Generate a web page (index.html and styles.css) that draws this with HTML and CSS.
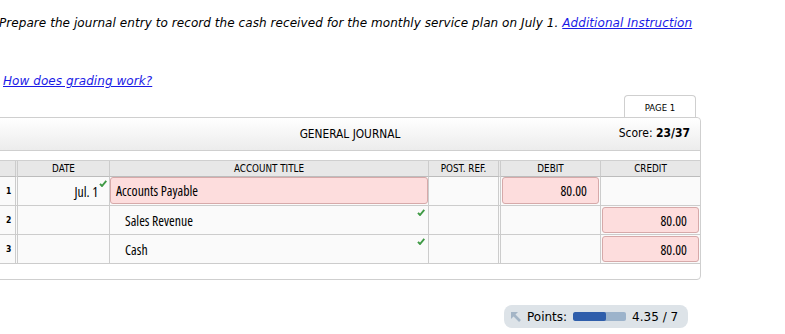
FILE: index.html
```html
<!DOCTYPE html>
<html>
<head>
<meta charset="utf-8">
<link rel="stylesheet" href="styles.css">
</head>
<body>
<div class="page">
  <p class="instr">Prepare the journal entry to record the cash received for the monthly service plan on July 1. <a href="#">Additional Instruction</a></p>
  <p class="grading"><a href="#">How does grading work?</a></p>

  <div class="tabs"><div class="tab">PAGE 1</div></div>
  <div class="panel">
    <div class="panel-head">
      <span class="title">GENERAL JOURNAL</span>
      <span class="score">Score: <b>23/37</b></span>
    </div>
    <div class="grid">
      <div class="h dbl"></div>
      <div class="h">DATE</div>
      <div class="h">ACCOUNT TITLE</div>
      <div class="h dbl">POST. REF.</div>
      <div class="h">DEBIT</div>
      <div class="h last">CREDIT</div>

      <div class="c num dbl">1</div>
      <div class="c date">Jul. 1<svg class="chk" viewBox="0 0 8 7" width="8" height="7"><path d="M1 3.8 L3 6 L7.3 0.8" fill="none" stroke="#3f9a45" stroke-width="1.9"/></svg></div>
      <div class="c"><div class="box">Accounts Payable</div></div>
      <div class="c dbl"></div>
      <div class="c"><div class="box amt">80.00</div></div>
      <div class="c last"></div>

      <div class="c num dbl">2</div>
      <div class="c date"></div>
      <div class="c acct"><span class="ind">Sales Revenue</span><svg class="chk" viewBox="0 0 8 7" width="8" height="7"><path d="M1 3.8 L3 6 L7.3 0.8" fill="none" stroke="#3f9a45" stroke-width="1.9"/></svg></div>
      <div class="c dbl"></div>
      <div class="c"></div>
      <div class="c last"><div class="box amt">80.00</div></div>

      <div class="c num dbl">3</div>
      <div class="c date"></div>
      <div class="c acct"><span class="ind">Cash</span><svg class="chk" viewBox="0 0 8 7" width="8" height="7"><path d="M1 3.8 L3 6 L7.3 0.8" fill="none" stroke="#3f9a45" stroke-width="1.9"/></svg></div>
      <div class="c dbl"></div>
      <div class="c"></div>
      <div class="c last"><div class="box amt">80.00</div></div>
    </div>
    <div class="panel-foot"></div>
  </div>

  <div class="points">
    <svg class="picon" viewBox="0 0 10 10" width="10" height="10"><path d="M0 0 H7 L0 7 Z" fill="#a4b5c6"/><path d="M2.5 2.5 L9 9" stroke="#a4b5c6" stroke-width="2.6"/></svg>
    <span class="plabel">Points:</span>
    <span class="bar"><span class="fill"></span></span>
    <span class="pval">4.35 / 7</span>
  </div>
</div>
</body>
</html>
```

FILE: styles.css
```css
html, body { margin: 0; padding: 0; background: #fff; }
body { font-family: "DejaVu Sans", Verdana, sans-serif; color: #000; }
.page { width: 785px; }

.instr {
  margin: 15px 0 0 -1px;
  font-size: 12px;
  letter-spacing: 0.065px;
  line-height: 16px;
  font-style: italic;
  white-space: nowrap;
}
.instr a, .grading a { color: #1a1ae6; text-decoration: underline; }
.grading {
  margin: 42px 0 0 3px;
  font-size: 12px;
  letter-spacing: 0.07px;
  line-height: 16px;
  font-style: italic;
}

.tabs {
  display: flex;
  justify-content: flex-end;
  width: 701px;
  margin-top: 6px;
  padding-right: 5px;
  box-sizing: border-box;
}
.tab {
  width: 72px;
  height: 22px;
  box-sizing: border-box;
  border: 1px solid #cfcfcf;
  border-bottom: none;
  border-radius: 4px 4px 0 0;
  background: #fff;
  font-family: "DejaVu Sans Condensed", "DejaVu Sans", sans-serif;
  font-size: 9.5px;
  display: flex;
  align-items: center;
  justify-content: center;
  padding-top: 1px;
}

.panel {
  margin-left: -1px;
  width: 702px;
  box-sizing: border-box;
  border: 1px solid #cfcfcf;
  border-radius: 0 4px 4px 0;
  background: #fff;
}
.panel-head {
  height: 32px;
  border-bottom: 1px solid #cfcfcf;
  background: linear-gradient(#ffffff, #ececec);
  border-radius: 0 4px 0 0;
  position: relative;
  display: flex;
  align-items: center;
  justify-content: center;
  font-family: "DejaVu Sans Condensed", "DejaVu Sans", sans-serif;
  font-size: 11.8px;
}
.score {
  position: absolute;
  right: 10px;
  top: 8px;
  font-size: 12px;
}
.grid {
  margin-top: 9px;
  display: grid;
  grid-template-columns: 18px 92px 319px 72px 100px 99px;
  border-top: 1px solid #cfcfcf;
}
.h, .c {
  box-sizing: border-box;
  border-right: 1px solid #cccccc;
  border-bottom: 1px solid #cccccc;
  position: relative;
}
.h {
  height: 16px;
  background: #e7e7e7;
  border-bottom-color: #bcbcbc;
  font-family: "DejaVu Sans Condensed", "DejaVu Sans", sans-serif;
  font-size: 9.8px;
  display: flex;
  align-items: center;
  justify-content: center;
}
.c {
  height: 29px;
  background: #fafafa;
  font-family: "Open Sans", "DejaVu Sans Condensed", sans-serif;
  font-stretch: 75%;
  font-size: 13.8px;
  display: flex;
  align-items: center;
}
.dbl { border-right: 3px double #cccccc; }
.last { border-right: none; }
.num {
  font-family: "DejaVu Sans Condensed", "DejaVu Sans", sans-serif;
  font-stretch: normal;
  font-size: 8.5px;
  font-weight: bold;
  padding-left: 6px;
}
.date { justify-content: flex-end; padding-right: 11px; }
.chk { position: absolute; top: 3px; right: 2px; }
.acct .chk { right: 3px; }
.ind { padding-left: 15px; }
.box {
  box-sizing: border-box;
  width: 100%;
  height: 27px;
  align-self: flex-start;
  background: #fddddd;
  border: 1px solid #d6a9a9;
  border-radius: 3px;
  display: flex;
  align-items: center;
  padding-left: 5px;
}
.c.last .box, .c .box.amt { margin: 0 1px; }
.box.amt { justify-content: flex-end; padding-right: 11px; }
.c.last .box { height: 26px; margin-top: 0; align-self: center; }
.panel-foot { height: 15px; }

.points {
  margin: 25px 0 0 504px;
  width: 184px;
  height: 23px;
  box-sizing: border-box;
  background: #dde3e8;
  border-radius: 8px;
  display: flex;
  align-items: center;
  padding-left: 7px;
  font-family: "DejaVu Sans", Verdana, sans-serif;
  font-size: 12px;
}
.picon { margin-right: 6px; }
.bar {
  width: 53px;
  height: 9px;
  margin: 0 6px 0 6px;
  background: #9cb3cb;
  border-radius: 2px;
  overflow: hidden;
  display: flex;
}
.fill { width: 33px; background: #2f5eab; border-radius: 2px; }
```
